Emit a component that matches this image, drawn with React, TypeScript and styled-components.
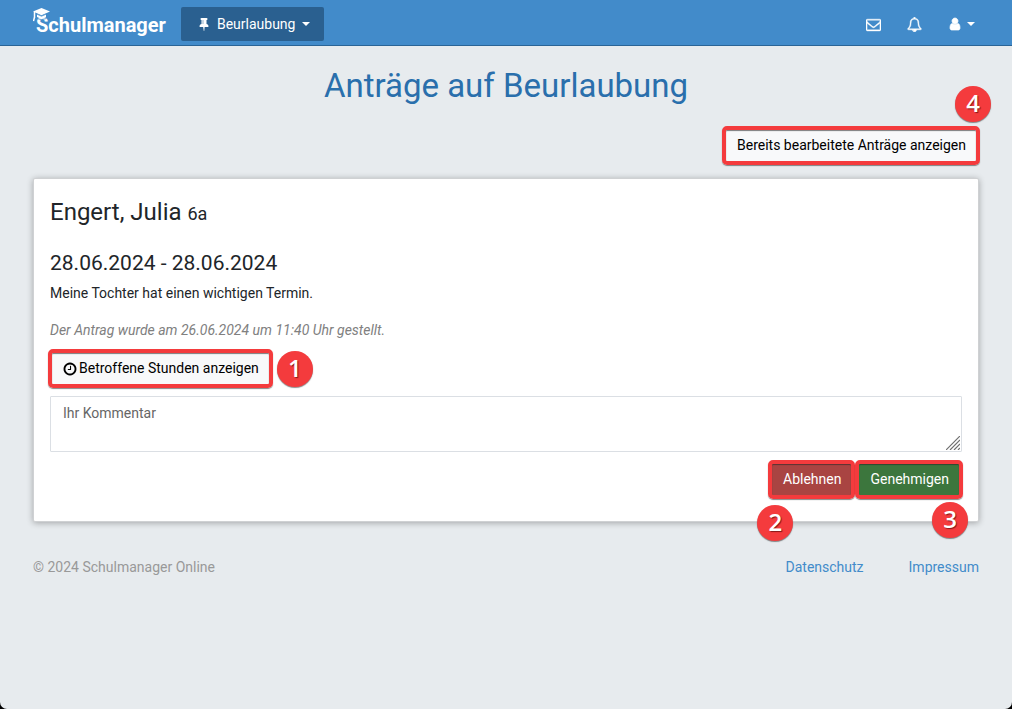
import React from "react";
import styled, { createGlobalStyle } from "styled-components";

const GlobalStyle = createGlobalStyle`
  *, *::before, *::after { box-sizing: border-box; }
  html { background: #000; }
  body {
    margin: 0;
    font-family: Roboto, "Liberation Sans", sans-serif;
    font-size: 14px;
    line-height: 21px;
    color: #212529;
  }
  button, textarea { font: inherit; }
`;

const Page = styled.div`
  min-height: 100vh;
  background: #e7ebee;
  border-radius: 0 0 7px 7px;
`;

const Navbar = styled.header`
  display: flex;
  align-items: center;
  justify-content: space-between;
  padding: 7px 37px 4px 33px;
  background: #428bca;
  border-bottom: 1px solid #2a6496;
`;

const NavGroup = styled.nav<{ $gap: number }>`
  display: flex;
  align-items: center;
  gap: ${(p) => p.$gap}px;
`;

const Brand = styled.a`
  position: relative;
  padding: 2px 0 0 3px;
  font-size: 20px;
  line-height: 32px;
  font-weight: 700;
  color: #fff;
  text-decoration: none;
`;

const Cap = styled.svg`
  position: absolute;
  left: 0;
  top: 1px;
  width: 18px;
  height: 15px;
`;

const MenuButton = styled.button`
  display: flex;
  align-items: center;
  height: 34px;
  padding: 0 14px 0 16px;
  border: 0;
  border-radius: 2px;
  background: #2a6090;
  color: #fff;
`;

const IconButton = styled.button`
  display: flex;
  align-items: center;
  gap: 5px;
  height: 34px;
  padding: 0;
  border: 0;
  background: none;
  color: #fff;
`;

const Caret = styled.span`
  border: 4px solid transparent;
  border-top-color: currentColor;
  border-bottom: 0;
`;

const Icon = styled.svg<{ $size?: number }>`
  width: ${(p) => p.$size ?? 14}px;
  height: ${(p) => p.$size ?? 14}px;
  fill: currentColor;
`;

const Content = styled.main`
  padding: 20px 33px 0;
`;

const Title = styled.h1`
  margin: 0;
  font-size: 33px;
  line-height: 40px;
  font-weight: 400;
  text-align: center;
  color: #2a6fac;
`;

const Actions = styled.div<{ $top: number; $end?: boolean }>`
  display: flex;
  justify-content: ${(p) => (p.$end ? "flex-end" : "flex-start")};
  gap: 3px;
  margin-top: ${(p) => p.$top}px;
`;

const Marked = styled.div`
  position: relative;
  &::after {
    content: "";
    position: absolute;
    inset: -2px -1px -2px -2px;
    border: 4px solid #f43b3d;
    border-radius: 5px;
    box-shadow: 0 1px 1px rgba(60, 60, 60, 0.6), inset 0 1px 1px rgba(40, 40, 40, 0.6);
    pointer-events: none;
  }
`;

const tones = {
  light: ["#f8f9fa", "#000"],
  danger: ["#a94442", "#fff"],
  success: ["#3c763d", "#fff"],
};

const Button = styled.button<{ $tone: keyof typeof tones }>`
  display: flex;
  align-items: center;
  gap: 2px;
  height: 35px;
  padding: 0 13px;
  border: 0;
  background: ${(p) => tones[p.$tone][0]};
  color: ${(p) => tones[p.$tone][1]};
`;

const Badge = styled.span<{ $x: number; $y: number }>`
  position: absolute;
  z-index: 1;
  right: ${(p) => p.$x}px;
  top: ${(p) => p.$y}px;
  width: 36px;
  height: 36px;
  border-radius: 50%;
  background: #f43b3d;
  box-shadow: 0 1px 1px rgba(60, 60, 60, 0.6);
  color: #fff;
  font: 600 24px/34px "Open Sans", sans-serif;
  text-align: center;
  text-shadow: 1px 1px 1px rgba(60, 0, 0, 0.6);
`;

const Card = styled.article`
  margin-top: 15px;
  padding: 16px 16px 24px;
  background: #fff;
  border: 1px solid #cfd1d3;
  border-radius: 2px;
  box-shadow: 0 1px 6px rgba(0, 0, 0, 0.3);
`;

const Name = styled.h2`
  margin: 0;
  font-size: 24px;
  line-height: 34px;
  font-weight: 400;
`;

const Grade = styled.small`
  font-size: 18px;
`;

const Period = styled.h3`
  margin: 19px 0 7px;
  font-size: 21px;
  line-height: 26px;
  font-weight: 400;
`;

const Text = styled.p`
  margin: 0 0 16px;
`;

const Submitted = styled.p`
  margin: 0;
  font-style: italic;
  color: #808080;
`;

const Comment = styled.textarea`
  display: block;
  width: 100%;
  height: 56px;
  margin-top: 10px;
  padding: 6px 12px;
  border: 1px solid #dbdfe4;
  border-radius: 1px;
  background: #fff;
  outline: 0;
  resize: none;
  &::placeholder { color: #666; opacity: 1; }
`;

const CommentBox = styled.div`
  position: relative;
`;

const Grip = styled.svg`
  position: absolute;
  right: 2px;
  bottom: 2px;
  width: 14px;
  height: 14px;
  stroke: #707070;
  stroke-width: 1.2;
  pointer-events: none;
`;

const Footer = styled.footer`
  display: flex;
  justify-content: space-between;
  padding: 35px 33px;
  color: #999;
`;

const FooterLinks = styled.nav`
  display: flex;
  gap: 45px;
`;

const FooterLink = styled.a`
  color: #428bca;
  text-decoration: none;
`;

const PinIcon = styled(Icon)`
  margin-right: 6px;
`;

const MenuCaret = styled(Caret)`
  margin-left: 7px;
`;

const paths = {
  pin: "M800 864v-448q0-14-9-23t-23-9-23 9-9 23v448q0 14 9 23t23 9 23-9 9-23zm672 352q0 26-19 45t-45 19h-429l-51 483q-2 12-10.5 20.5t-20.5 8.5h-1q-27 0-32-27l-76-485h-404q-26 0-45-19t-19-45q0-123 78.5-221.5t177.5-98.5v-512q-52 0-90-38t-38-90 38-90 90-38h640q52 0 90 38t38 90-38 90-90 38v512q99 0 177.5 98.5t78.5 221.5z",
  envelope: "M1664 1504v-768q-32 36-69 66-268 206-426 338-51 43-83 67t-86.5 48.5-102.5 24.5h-2q-48 0-102.5-24.5t-86.5-48.5-83-67q-158-132-426-338-37-30-69-66v768q0 13 9.5 22.5t22.5 9.5h1472q13 0 22.5-9.5t9.5-22.5zm0-1051v-24.5l-.5-13-3-12.5-5.5-9-9-7.5-14-2.5h-1472q-13 0-22.5 9.5t-9.5 22.5q0 168 147 284 193 152 401 317 6 5 35 29.5t46 37.5 44.5 31.5 50.5 27.5 43 9h2q20 0 43-9t50.5-27.5 44.5-31.5 46-37.5 35-29.5q208-165 401-317 54-43 100.5-115.5t46.5-131.5zm128-37v1088q0 66-47 113t-113 47h-1472q-66 0-113-47t-47-113v-1088q0-66 47-113t113-47h1472q66 0 113 47t47 113z",
  bell: "M912 1696q0-16-16-16-59 0-101.5-42.5t-42.5-101.5q0-16-16-16t-16 16q0 73 51.5 124.5t124.5 51.5q16 0 16-16zm-666-288h1300q-266-300-266-832 0-51-24-105t-69-103-121.5-80.5-169.5-31.5-169.5 31.5-121.5 80.5-69 103-24 105q0 532-266 832zm1482 0q0 52-38 90t-90 38h-448q0 106-75 181t-181 75-181-75-75-181h-448q-52 0-90-38t-38-90q50-42 91-88t85-119.5 74.5-158.5 50-206 19.5-260q0-152 117-282.5t307-158.5q-8-19-8-39 0-40 28-68t68-28 68 28 28 68q0 20-8 39 190 28 307 158.5t117 282.5q0 139 19.5 260t50 206 74.5 158.5 85 119.5 91 88z",
  user: "M1536 1399q0 109-62.5 187t-150.5 78h-854q-88 0-150.5-78t-62.5-187q0-85 8.5-160.5t31.5-152 58.5-131 94-89 134.5-34.5q131 128 313 128t313-128q76 0 134.5 34.5t94 89 58.5 131 31.5 152 8.5 160.5zm-256-887q0 159-112.5 271.5t-271.5 112.5-271.5-112.5-112.5-271.5 112.5-271.5 271.5-112.5 271.5 112.5 112.5 271.5z",
  clock: "M1024 544v448q0 14-9 23t-23 9h-320q-14 0-23-9t-9-23v-64q0-14 9-23t23-9h224v-352q0-14 9-23t23-9h64q14 0 23 9t9 23zm416 352q0-148-73-273t-198-198-273-73-273 73-198 198-73 273 73 273 198 198 273 73 273-73 198-198 73-273zm224 0q0 209-103 385.5t-279.5 279.5-385.5 103-385.5-103-279.5-279.5-103-385.5 103-385.5 279.5-279.5 385.5-103 385.5 103 279.5 279.5 103 385.5z",
};

const box = "0 0 1792 1792";
const clockBox = "64 64 1664 1664";

export default function App() {
  return (
    <>
      <GlobalStyle />
      <Page>
        <Navbar>
          <NavGroup $gap={15}>
            <Brand href="#">
              <Cap viewBox="0 0 18 15" aria-hidden="true">
                <path d="M0 3.6 8.5 0 17 3.6 8.5 7.2z" fill="#fff" />
                <path d="M4 6v3q4.500 2.500 9 0V6L8.500 8z" fill="#fff" />
                <path d="M1.500 4v6M.5 13l1-4" fill="none" stroke="#fff" strokeWidth="1.500" />
                <path d="M3.500 6 8.500 8.200 13.500 6M3.500 10.500q5 2.200 10 0" fill="none" stroke="#428bca" strokeWidth=".8" />
              </Cap>
              Schulmanager
            </Brand>
            <MenuButton>
              <PinIcon viewBox={box} aria-hidden="true"><path d={paths.pin} /></PinIcon>
              Beurlaubung
              <MenuCaret />
            </MenuButton>
          </NavGroup>
          <NavGroup $gap={26}>
            <IconButton aria-label="Nachrichten">
              <Icon $size={15} viewBox={box} stroke="currentColor" strokeWidth="50"><path d={paths.envelope} /></Icon>
            </IconButton>
            <IconButton aria-label="Benachrichtigungen">
              <Icon $size={15} viewBox={box} stroke="currentColor" strokeWidth="50"><path d={paths.bell} /></Icon>
            </IconButton>
            <IconButton aria-label="Benutzerkonto">
              <Icon viewBox={box} stroke="currentColor" strokeWidth="90"><path d={paths.user} /></Icon>
              <Caret />
            </IconButton>
          </NavGroup>
        </Navbar>
        <Content>
          <Title>Anträge auf Beurlaubung</Title>
          <Actions $top={22} $end>
            <Marked>
              <Button $tone="light">Bereits bearbeitete Anträge anzeigen</Button>
              <Badge $x={-12} $y={-42}>4</Badge>
            </Marked>
          </Actions>
          <Card>
            <Name>Engert, Julia <Grade>6a</Grade></Name>
            <Period>28.06.2024 - 28.06.2024</Period>
            <Text>Meine Tochter hat einen wichtigen Termin.</Text>
            <Submitted>Der Antrag wurde am 26.06.2024 um 11:40 Uhr gestellt.</Submitted>
            <Actions $top={10}>
              <Marked>
                <Button $tone="light">
                  <Icon viewBox={clockBox} aria-hidden="true"><path d={paths.clock} /></Icon>
                  Betroffene Stunden anzeigen
                </Button>
                <Badge $x={-41} $y={0}>1</Badge>
              </Marked>
            </Actions>
            <CommentBox>
              <Comment aria-label="Ihr Kommentar" placeholder="Ihr Kommentar" />
              <Grip viewBox="0 0 14 14" aria-hidden="true">
                <path d="M0 14 14 0M4 14 14 4M8 14l6-6M12 14l2-2" />
              </Grip>
            </CommentBox>
            <Actions $top={10} $end>
              <Marked>
                <Button $tone="danger">Ablehnen</Button>
                <Badge $x={61} $y={43}>2</Badge>
              </Marked>
              <Marked>
                <Button $tone="success">Genehmigen</Button>
                <Badge $x={-6} $y={40}>3</Badge>
              </Marked>
            </Actions>
          </Card>
        </Content>
        <Footer>
          <span>© 2024 Schulmanager Online</span>
          <FooterLinks>
            <FooterLink href="#">Datenschutz</FooterLink>
            <FooterLink href="#">Impressum</FooterLink>
          </FooterLinks>
        </Footer>
      </Page>
    </>
  );
}
